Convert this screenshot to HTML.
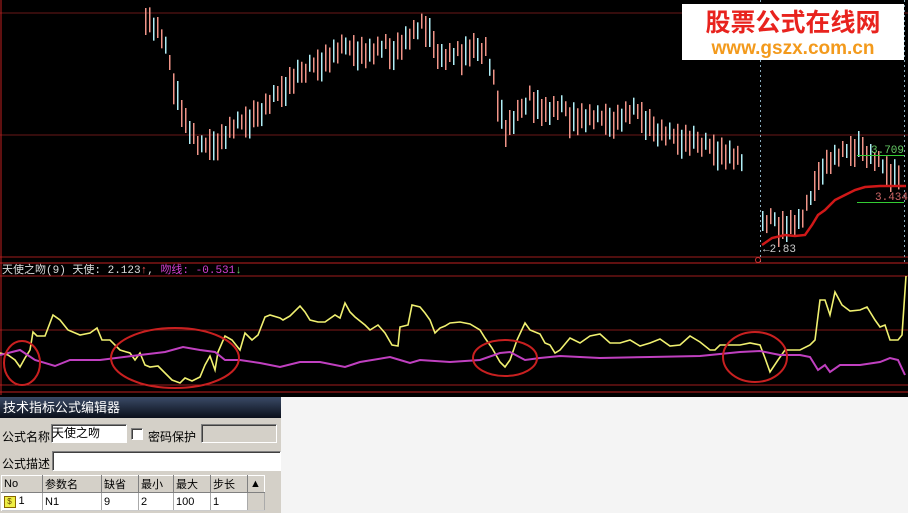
<!DOCTYPE html>
<html><head><meta charset="utf-8"><style>
body{margin:0;width:908px;height:513px;overflow:hidden;background:#f4f4f4;font-family:"Liberation Sans","Noto Sans CJK SC",sans-serif}
#c{position:absolute;left:0;top:0}
.dlg{position:absolute;left:0;top:397px;width:281px;height:116px;background:#d4d0c8;font-size:12px;color:#000}
.tb{height:21px;background:linear-gradient(#3a4a66,#0a0f1a);color:#fff;font-size:13px;line-height:21px;padding-left:3px}
.fld{position:absolute;background:#fff;border:1px solid #808080;border-right-color:#fff;border-bottom-color:#fff;box-shadow:inset 1px 1px 0 #404040}
.lbl{position:absolute;font-size:12px}
table{position:absolute;left:1px;top:78px;border-collapse:collapse;font-size:11px;background:#fff}
td{height:17px;padding:0 2px;border-right:1px solid #aaa;border-bottom:1px solid #ccc}
tr.h td{background:#d4d0c8;border:1px solid #fff;border-right-color:#808080;border-bottom-color:#808080;height:15px}
</style></head><body>
<svg id="c" width="908" height="397" xmlns="http://www.w3.org/2000/svg">
<rect width="908" height="397" fill="#000"/>
<g stroke="#a01c1c" stroke-width="1" shape-rendering="crispEdges">
<line x1="0" y1="13" x2="908" y2="13" stroke="#6a1818"/><line x1="0" y1="135" x2="908" y2="135" stroke="#6a1818"/>
<line x1="0" y1="257" x2="908" y2="257"/><line x1="0" y1="263" x2="908" y2="263" stroke="#c02020"/>
<line x1="0" y1="276" x2="908" y2="276"/><line x1="0" y1="330" x2="908" y2="330" stroke="#801818"/>
<line x1="0" y1="385" x2="908" y2="385"/><line x1="0" y1="392" x2="908" y2="392" stroke="#c02020"/>
<line x1="1" y1="0" x2="1" y2="395" stroke="#c02020"/>
</g>
<line x1="760.5" y1="0" x2="760.5" y2="262" stroke="#8ab" stroke-dasharray="2,3"/>
<line x1="904.5" y1="0" x2="904.5" y2="262" stroke="#8ab" stroke-dasharray="2,3"/>
<g id="candles"></g>
<line x1="857" y1="155.5" x2="904" y2="155.5" stroke="#3c3"/>
<line x1="857" y1="202.5" x2="904" y2="202.5" stroke="#3c3"/>
<text x="871" y="153" fill="#6c6" font-size="11" font-family="Liberation Mono">3.709</text>
<text x="875" y="200" fill="#c66" font-size="11" font-family="Liberation Mono">3.434</text>
<polyline fill="none" stroke="#d01818" stroke-width="2.5" points="762,245 772,238 785,235 795,236 805,235 812,225 818,215 825,210 835,200 845,195 855,190 865,187 880,186 895,186 906,186"/>
<text x="763" y="252" fill="#ccc" font-size="11" font-family="Liberation Mono">←2.83</text>
<circle cx="758" cy="260" r="2.5" fill="none" stroke="#c33"/>
<text x="2" y="273" fill="#ddd" font-size="11" font-family="Liberation Mono,Noto Sans CJK SC">天使之吻(9) 天使: 2.123<tspan fill="#e55">↑</tspan>, <tspan fill="#d040d0">吻线: -0.531</tspan><tspan fill="#6c6">↓</tspan></text>
<polyline fill="none" stroke="#f0f070" stroke-width="1.6" points="0,353 8,355 15,360 20,367 25,358 30,350 33,332 37,336 45,336 53,315 60,320 68,330 80,335 90,333 97,328 102,340 110,340 120,350 130,353 135,360 140,353 145,365 150,367 158,366 165,373 172,380 180,383 185,378 192,381 200,377 205,365 210,356 215,370 218,352 225,336 232,340 240,350 245,333 252,340 258,335 265,317 270,315 280,318 283,320 290,316 300,306 305,312 310,320 318,322 325,322 335,315 340,318 345,303 350,312 355,317 365,325 370,330 378,325 385,333 392,345 398,346 400,327 408,325 412,305 420,307 425,313 430,320 435,333 440,328 445,326 450,323 460,322 470,324 480,330 485,338 492,348 500,362 505,367 510,360 517,340 525,323 530,330 540,334 545,343 550,345 555,353 560,350 570,338 580,343 590,336 600,334 610,343 620,343 630,340 640,346 650,343 660,339 670,346 680,345 690,336 700,342 710,350 715,350 720,345 740,345 750,343 760,345 765,358 770,372 778,360 785,350 790,350 800,350 810,345 815,340 820,300 825,300 830,315 835,292 842,305 850,311 860,310 867,307 875,320 880,327 885,325 890,340 898,340 902,335 906,276"/>
<polyline fill="none" stroke="#c040c0" stroke-width="2" points="0,355 20,350 35,360 55,366 70,360 100,360 140,355 165,352 183,347 200,350 215,352 225,360 240,360 260,363 280,367 300,362 320,362 345,367 360,362 390,357 400,360 410,363 420,360 450,362 480,360 500,353 510,352 525,360 540,358 560,356 600,358 650,357 700,356 740,352 760,351 780,355 800,355 810,357 818,370 825,365 830,372 840,365 860,365 880,362 890,358 898,360 905,375"/>
<g fill="none" stroke="#c82020" stroke-width="2">
<ellipse cx="22" cy="363" rx="18" ry="22"/><ellipse cx="175" cy="358" rx="64" ry="30"/>
<ellipse cx="505" cy="358" rx="32" ry="18"/><ellipse cx="755" cy="357" rx="32" ry="25"/>
</g>
<rect x="682" y="4" width="222" height="56" fill="#fff"/>
<text x="793" y="31" text-anchor="middle" fill="#e8231e" font-size="25" font-weight="bold">股票公式在线网</text>
<text x="793" y="54" text-anchor="middle" fill="#f39a1c" font-size="19" font-weight="bold">www.gszx.com.cn</text>
</svg>
<div class="dlg">
<div class="tb">技术指标公式编辑器</div>
<div class="lbl" style="left:2px;top:31px">公式名称</div>
<div class="fld" style="left:51px;top:27px;width:74px;height:17px;line-height:17px">天使之吻</div>
<div class="fld" style="left:131px;top:31px;width:10px;height:10px"></div>
<div class="lbl" style="left:148px;top:31px">密码保护</div>
<div class="fld" style="left:201px;top:27px;width:74px;height:17px;background:#d4d0c8"></div>
<div class="lbl" style="left:2px;top:58px">公式描述</div>
<div class="fld" style="left:52px;top:54px;width:227px;height:18px"></div>
<table><tr class="h"><td style="width:36px">No</td><td style="width:54px">参数名</td><td style="width:32px">缺省</td><td style="width:30px">最小</td><td style="width:32px">最大</td><td style="width:32px">步长</td><td style="width:12px;border-right:0">▲</td></tr>
<tr><td><span style="display:inline-block;width:10px;height:10px;background:#ee4;border:1px solid #860;font-size:8px;line-height:10px;text-align:center;color:#640">$</span> 1</td><td>N1</td><td>9</td><td>2</td><td>100</td><td>1</td><td style="background:#d4d0c8"></td></tr></table>
</div>
<script>
var pts=[[145,5],[160,25],[175,75],[185,110],[200,140],[215,130],[230,118],[250,108],[270,90],[290,70],[310,55],[330,45],[350,35],[370,42],[390,38],[410,25],[425,15],[440,45],[455,45],[470,38],[485,38],[495,80],[505,118],[515,108],[530,85],[545,100],[560,100],[580,105],[600,110],[620,105],[635,100],[650,115],[670,125],[690,130],[710,135],[730,145],[742,155]];
var pts2=[[762,215],[775,212],[790,212],[800,212],[810,190],[820,155],[830,148],[840,145],[850,140],[860,135],[870,145],[880,155],[890,162],[900,165]];
var g=document.getElementById('candles'),s='';
function run(p){for(var x=p[0][0];x<=p[p.length-1][0];x+=4){var i=0;while(i<p.length-2&&p[i+1][0]<x)i++;var a=p[i],b=p[i+1],t=(x-a[0])/(b[0]-a[0]);var y=a[1]+(b[1]-a[1])*t+((x*37)%11)-5;var h=14+((x*13)%18);var c=((x*7)%3)?'#f09488':'#b0eef6';s+='<rect x="'+x+'" y="'+y+'" width="1.5" height="'+h+'" fill="'+c+'"/>';}}
run(pts);run(pts2);g.innerHTML=s;
</script>
</body></html>
